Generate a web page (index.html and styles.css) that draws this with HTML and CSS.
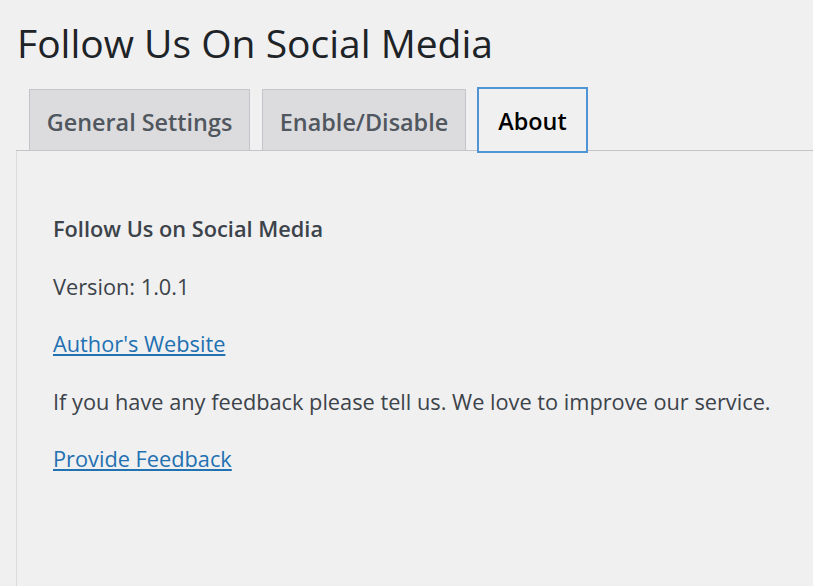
FILE: index.html
```html
<!DOCTYPE html>
<html lang="en">
<head>
<meta charset="utf-8">
<title>Follow Us On Social Media</title>
<link rel="stylesheet" href="styles.css">
</head>
<body>
<div class="wrap">
  <h1 class="page-title">Follow Us On Social Media</h1>
  <nav class="tabs">
    <a class="tab tab-general" href="#">General Settings</a>
    <a class="tab tab-enable" href="#">Enable/Disable</a>
    <a class="tab tab-about active" href="#">About</a>
  </nav>
  <div class="panel">
    <p class="strong">Follow Us on Social Media</p>
    <p>Version: 1.0.1</p>
    <p><a class="link" href="#">Author's Website</a></p>
    <p>If you have any feedback please tell us. We love to improve our service.</p>
    <p><a class="link" href="#">Provide Feedback</a></p>
  </div>
</div>
</body>
</html>
```
FILE: styles.css
```css
html, body {
  margin: 0;
  padding: 0;
  background: #f0f0f1;
  height: 100%;
  overflow: hidden;
}
body {
  font-family: "Open Sans", "Noto Sans", sans-serif;
  color: #3c434a;
}
.wrap {
  padding-left: 16px;
  display: flex;
  flex-direction: column;
  height: 100%;
}
.page-title {
  margin: 0;
  padding: 16px 0 0 1px;
  font-size: 39px;
  font-weight: 400;
  line-height: 54px;
  color: #1d2327;
  white-space: nowrap;
}
.tabs {
  display: flex;
  align-items: flex-end;
  gap: 12px;
  margin-top: 19px;
  padding-left: 13px;
  border-bottom: 1px solid #c3c4c7;
  height: 61px;
}
.tab {
  box-sizing: border-box;
  height: 62px;
  margin-bottom: -1px;
  display: flex;
  align-items: center;
  justify-content: center;
  padding-top: 3px;
  background: #dcdcde;
  border: 1px solid #c3c4c7;
  font-size: 23.4px;
  font-weight: 600;
  color: #50575e;
  text-decoration: none;
  white-space: nowrap;
}
.tab-general { width: 221px; }
.tab-enable { width: 204px; }
.tab.active {
  background: #f0f0f1;
  color: #000;
  border-color: #4f94d4;
  box-shadow: 0 0 0 1px #4f94d4;
  width: 109px;
  height: 64px;
  margin-bottom: -2px;
  padding-top: 2px;
}
.panel {
  flex: 1;
  border-left: 1px solid #dcdcde;
  padding: 61px 36px 0;
  display: flex;
  flex-direction: column;
  gap: 23.5px;
  font-size: 21.75px;
  line-height: 34px;
}
.panel p { margin: 0; white-space: nowrap; }
.strong { font-weight: 600; }
.link { color: #2271b1; text-decoration: underline; }
```
